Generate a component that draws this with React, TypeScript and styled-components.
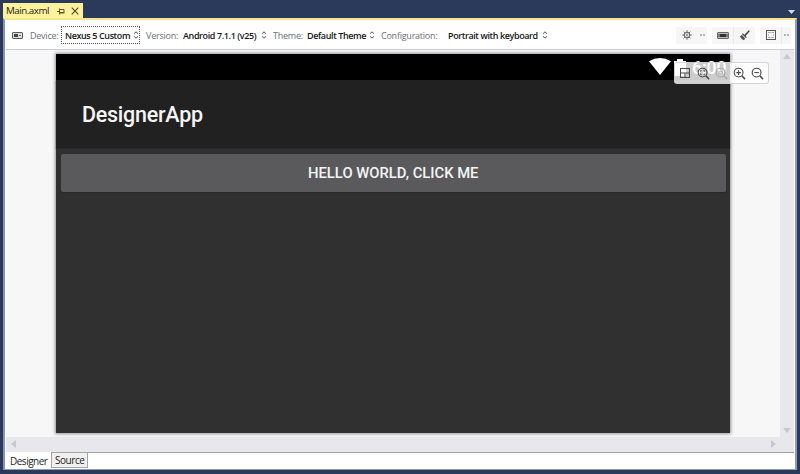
import React from "react";
import styled, { createGlobalStyle } from "styled-components";

const Global = createGlobalStyle`
  *, *::before, *::after { box-sizing: border-box; }
  html, body { margin: 0; padding: 0; overflow: hidden; }
  body { font-family: "Open Sans", "Noto Sans", sans-serif; color: #1e1e1e; }
  svg { display: block; flex: none; }
`;

const Window = styled.div`
  width: 800px;
  height: 474px;
  padding: 3px 3px 4px 3px;
  background: #2b3a5a;
  display: flex;
  flex-direction: column;
`;

const TabStrip = styled.header`
  height: 15px;
  flex: none;
  display: flex;
  justify-content: space-between;
  padding-right: 2px;
`;

const DocumentTab = styled.div`
  width: 80px;
  height: 15px;
  padding-left: 3px;
  background: #fff29d;
  display: flex;
  align-items: center;
  gap: 8px;
  color: #1b1b1b;
`;

const TabTitle = styled.span`
  width: 43px;
  font-size: 9.8px;
  line-height: 14px;
  letter-spacing: -0.5px;
  white-space: nowrap;
  padding-top: 1px;
`;

const TabIcons = styled.div`
  display: flex;
  align-items: center;
  gap: 6px;
  padding-top: 1px;
`;

const StripMenu = styled.div`
  display: flex;
  align-items: center;
  padding-top: 3px;
`;

const Panel = styled.main`
  flex: 1;
  display: flex;
  flex-direction: column;
  background: #fff;
  border-top: 2px solid #f4e88f;
  border-left: 2px solid #8693b5;
  border-right: 2px solid #8e9bbc;
  border-bottom: 1px solid #8e9bbc;
  padding: 0 1px;
`;

const Toolbar = styled.div`
  height: 30px;
  flex: none;
  display: flex;
  align-items: center;
  padding: 1px 0 0 6px;
  border-bottom: 1px solid #c9ccd0;
`;

const FieldLabel = styled.span<{ $w: number; $indent?: number }>`
  width: ${(p) => p.$w}px;
  padding: 1px 0 0 ${(p) => p.$indent ?? 0}px;
  flex: none;
  font-size: 9px;
  line-height: 14px;
  letter-spacing: -0.24px;
  color: #6a6f77;
  white-space: nowrap;
`;

const Picker = styled.div<{ $w: number; $focus?: boolean }>`
  width: ${(p) => p.$w}px;
  height: 18px;
  flex: none;
  display: flex;
  align-items: center;
  justify-content: space-between;
  padding: 0 0 0 3px;
  border: 1px dotted ${(p) => (p.$focus ? "#555" : "transparent")};
`;

const PickerText = styled.span`
  font-size: 9px;
  font-weight: 600;
  line-height: 14px;
  letter-spacing: -0.39px;
  color: #161616;
  white-space: nowrap;
  padding-top: 1px;
`;

const KeyIcon = styled.div`
  width: 18px;
  flex: none;
`;

const ActionGroups = styled.div`
  margin-left: auto;
  display: flex;
  gap: 5px;
  padding-right: 3px;
`;

const ActionGroup = styled.div`
  display: flex;
  height: 17px;
  border-radius: 2px;
  background: #f6f6f6;
`;

const ActionButton = styled.div<{ $w: number; $divided?: boolean }>`
  width: ${(p) => p.$w}px;
  display: flex;
  align-items: center;
  justify-content: center;
  border-left: ${(p) => (p.$divided ? "1px solid #e9e9e9" : "none")};
`;

const Workspace = styled.div`
  flex: 1;
  display: grid;
  grid-template-columns: 1fr 14px;
  grid-template-rows: 1fr 14px;
  background: #e8e8ec;
  border-bottom: 1px solid #e8e8ec;
`;

const Canvas = styled.div`
  position: relative;
  background: #f7f7f7;
  padding: 4px 0 0 50px;
`;

const Scrollbar = styled.div<{ $vertical?: boolean }>`
  display: flex;
  flex-direction: ${(p) => (p.$vertical ? "column" : "row")};
  justify-content: space-between;
  align-items: center;
  padding: ${(p) => (p.$vertical ? "4px 0 4px" : "0 4px 0 5px")};
`;

const Device = styled.div`
  width: 674px;
  height: 379px;
  background: #303030;
  box-shadow: 0 0 3px 1px rgba(0, 0, 0, 0.4);
  font-family: Roboto, sans-serif;
  color: #fff;
`;

const StatusBar = styled.div`
  height: 26px;
  background: #000;
  display: flex;
  padding: 4px 3px 0 0;
  justify-content: flex-end;
`;

const BatteryIcon = styled.div`
  width: 12px;
  margin-left: 3px;
  padding-top: 1px;
`;

const Clock = styled.span`
  width: 35px;
  margin-left: 6px;
  font-size: 17.5px;
  font-weight: 500;
  line-height: 20px;
  white-space: nowrap;
`;

const AppBar = styled.div`
  height: 68px;
  padding-left: 26px;
  display: flex;
  align-items: center;
  background: #212121;
  box-shadow: 0 1px 1px #292929;
`;

const AppTitle = styled.span`
  font-size: 21.5px;
  font-weight: 500;
  letter-spacing: -0.25px;
  color: #f5f5f5;
`;

const HelloButton = styled.div`
  height: 38px;
  margin: 6px 4px 0 4.5px;
  border-radius: 2px;
  background: #5a5a5c;
  box-shadow: 0 1px 1px #292929;
  display: flex;
  align-items: center;
  justify-content: center;
  font-size: 14.8px;
  font-weight: 500;
  color: #f5f5f5;
  white-space: nowrap;
`;

const ZoomBar = styled.div`
  position: absolute;
  left: 668px;
  top: 12px;
  width: 95px;
  height: 22px;
  padding-left: 5px;
  display: flex;
  align-items: center;
  gap: 5px;
  border: 1px solid rgba(205, 205, 205, 0.85);
  border-radius: 3px;
  background: rgba(255, 255, 255, 0.8);
`;

const PanesIcon = styled.div`
  margin-right: 2px;
`;

const ViewTabs = styled.footer`
  height: 17px;
  flex: none;
  display: flex;
  align-items: flex-start;
`;

const ViewTab = styled.div<{ $active?: boolean }>`
  width: ${(p) => (p.$active ? 45 : 37)}px;
  height: ${(p) => (p.$active ? 17 : 16)}px;
  border: ${(p) => (p.$active ? "none" : "1px solid #a5a5a5")};
  background: ${(p) => (p.$active ? "#fff" : "#f0f0f0")};
  padding: ${(p) => (p.$active ? "2px 0 0 4px" : "0 0 0 3px")};
  font-size: 10px;
  line-height: 15px;
  letter-spacing: ${(p) => (p.$active ? -0.5 : -0.45)}px;
  white-space: nowrap;
`;

const ViewTabsRule = styled.div`
  flex: 1;
  height: 1px;
  background: #a0a0a0;
`;

const UpDown = () => (
  <svg width="6" height="8" viewBox="0 0 6 8" fill="none" stroke="#555" strokeWidth="1">
    <path d="M1 2.7 3 .8l2 1.9M1 5.3l2 1.9 2-1.9" />
  </svg>
);

const arrows = {
  up: "M0 5 4 0l4 5z",
  down: "M0 0h8L4 5z",
  left: "M5 0v8L0 4z",
  right: "M0 0v8l5-4z",
};

const Arrow = ({ dir }: { dir: keyof typeof arrows }) => {
  const tall = dir === "left" || dir === "right";
  return (
    <svg width={tall ? 5 : 8} height={tall ? 8 : 5} fill="#c6c7d0">
      <path d={arrows[dir]} />
    </svg>
  );
};

const Keyboard = () => (
  <svg width="11" height="7" viewBox="0 0 11 7">
    <rect x=".5" y=".5" width="10" height="6" rx=".6" fill="#ddd" stroke="#555" />
    <path d="M2 2h4v3H2z" fill="#444" />
    <path d="M7 3.5h2" stroke="#777" />
  </svg>
);

const Pin = () => (
  <svg width="8" height="7" viewBox="0 0 8 7" fill="none" stroke="#5c5634">
    <path d="M0 3.5h2.5M2.5.5v6M3 1.5h4v3H3M3 5h4.5" />
  </svg>
);

const Close = () => (
  <svg width="8" height="8" viewBox="0 0 8 8" stroke="#4a452c" strokeWidth="1.1">
    <path d="m.7.7 6.6 6.6M7.3.7.7 7.3" />
  </svg>
);

const Gear = () => (
  <svg width="12" height="12" viewBox="0 0 12 12" fill="none" stroke="#707070">
    <circle cx="6" cy="6" r="2.7" strokeWidth="1.2" />
    <circle cx="6" cy="6" r=".8" strokeWidth=".8" />
    <path d="M6 1.2v2M6 8.8v2M1.2 6h2M8.8 6h2M2.6 2.6 4 4M8 8l1.4 1.4M2.6 9.4 4 8M8 4l1.4-1.4" />
  </svg>
);

const Dots = () => (
  <svg width="5" height="2" fill="#777">
    <path d="M0 .5h2v1H0zM3 .5h2v1H3z" />
  </svg>
);

const DeviceFrame = () => (
  <svg width="12" height="7" viewBox="0 0 12 7">
    <rect x=".5" y=".5" width="11" height="6" rx=".5" fill="#bbb" stroke="#666" />
    <path d="M2.5 2h7v3h-7z" fill="#333" />
    <path d="M1.5 2v3M10.5 2v3" stroke="#555" strokeWidth=".6" />
  </svg>
);

const Brush = () => (
  <svg width="11" height="11" viewBox="0 0 11 11">
    <path d="M9.8 1.2 6 5.4" stroke="#484848" strokeWidth="1.6" strokeLinecap="round" />
    <path d="m3.8 3.2 4 4-.9.9-4-4z" fill="#444" />
    <path d="m2.7 4.8 3.4 3.4-1 2C3.4 9.8 1.5 8.2.8 6c1 0 1.5-.4 1.9-1.2z" fill="#555" />
  </svg>
);

const GridBox = () => (
  <svg width="10" height="10" viewBox="0 0 10 10">
    <rect x=".5" y=".5" width="9" height="9" fill="none" stroke="#555" />
    <path d="M2.5 2h1v1h-1zM6.5 2h1v1h-1zM2.5 7h1v1h-1zM6.5 7h1v1h-1z" fill="#555" />
    <path d="M4.5 2.5h1M4.5 7.5h1M2.5 4.5v1M7.5 4.5v1" stroke="#999" />
  </svg>
);

const Panes = () => (
  <svg width="10" height="10" viewBox="0 0 10 10" fill="none" stroke="#4b4b4b" strokeWidth="1.1">
    <path d="M.5.5h9v9h-9zM.5 5h9M5 5v4.5" />
  </svg>
);

const Lens = ({ kind, faded }: { kind: "fit" | "actual" | "in" | "out"; faded?: boolean }) => (
  <svg
    width="13"
    height="13"
    viewBox="0 0 13 13"
    fill="none"
    stroke={faded ? "#aaa" : "#4b4b4b"}
    strokeWidth="1.1"
  >
    <circle cx="5.6" cy="5.6" r="4.4" />
    <path d="m8.9 8.9 3.2 3.2" strokeWidth="1.5" />
    {kind === "in" && <path d="M3.3 5.6h4.6M5.6 3.3v4.6" />}
    {kind === "out" && <path d="M3.3 5.6h4.6" />}
    {kind === "fit" && (
      <path strokeWidth=".8" d="M3.5 4.8V3.5h1.3M6.4 3.5h1.3v1.3M3.5 6.4v1.3h1.3M6.4 7.7h1.3V6.4" />
    )}
    {kind === "actual" && <path d="M4 4v3.2M7.2 4v3.2M5.6 4.5v.8M5.6 6v.8" />}
  </svg>
);

const Wifi = () => (
  <svg width="22" height="17" viewBox="0 0 22 17">
    <path d="M0 3.2Q11-3 22 3.2L11 17z" fill="#fff" />
  </svg>
);

const Battery = () => (
  <svg width="12" height="17" fill="#fff">
    <path d="M3 0h6v2h3v15H0V2h3z" />
  </svg>
);

export default function App() {
  return (
    <>
      <Global />
      <Window>
        <TabStrip>
          <DocumentTab>
            <TabTitle>Main.axml</TabTitle>
            <TabIcons>
              <Pin />
              <Close />
            </TabIcons>
          </DocumentTab>
          <StripMenu>
            <svg width="7" height="4" fill="#d5dae8">
              <path d="M0 0h7L3.5 4z" />
            </svg>
          </StripMenu>
        </TabStrip>
        <Panel>
          <Toolbar>
            <KeyIcon>
              <Keyboard />
            </KeyIcon>
            <FieldLabel $w={31}>Device:</FieldLabel>
            <Picker $w={79} $focus>
              <PickerText>Nexus 5 Custom</PickerText>
              <UpDown />
            </Picker>
            <FieldLabel $w={39} $indent={6}>Version:</FieldLabel>
            <Picker $w={89}>
              <PickerText>Android 7.1.1 (v25)</PickerText>
              <UpDown />
            </Picker>
            <FieldLabel $w={35} $indent={5}>Theme:</FieldLabel>
            <Picker $w={73}>
              <PickerText>Default Theme</PickerText>
              <UpDown />
            </Picker>
            <FieldLabel $w={68} $indent={5}>Configuration:</FieldLabel>
            <Picker $w={105}>
              <PickerText>Portrait with keyboard</PickerText>
              <UpDown />
            </Picker>
            <ActionGroups>
              <ActionGroup>
                <ActionButton $w={21}><Gear /></ActionButton>
                <ActionButton $w={10}><Dots /></ActionButton>
              </ActionGroup>
              <ActionGroup>
                <ActionButton $w={21}><DeviceFrame /></ActionButton>
                <ActionButton $w={22} $divided><Brush /></ActionButton>
              </ActionGroup>
              <ActionGroup>
                <ActionButton $w={21}><GridBox /></ActionButton>
                <ActionButton $w={10} $divided><Dots /></ActionButton>
              </ActionGroup>
            </ActionGroups>
          </Toolbar>
          <Workspace>
            <Canvas>
              <Device>
                <StatusBar>
                  <Wifi />
                  <BatteryIcon>
                    <Battery />
                  </BatteryIcon>
                  <Clock>6:00</Clock>
                </StatusBar>
                <AppBar>
                  <AppTitle>DesignerApp</AppTitle>
                </AppBar>
                <HelloButton>HELLO WORLD, CLICK ME</HelloButton>
              </Device>
              <ZoomBar>
                <PanesIcon>
                  <Panes />
                </PanesIcon>
                <Lens kind="fit" />
                <Lens kind="actual" faded />
                <Lens kind="in" />
                <Lens kind="out" />
              </ZoomBar>
            </Canvas>
            <Scrollbar $vertical>
              <Arrow dir="up" />
              <Arrow dir="down" />
            </Scrollbar>
            <Scrollbar>
              <Arrow dir="left" />
              <Arrow dir="right" />
            </Scrollbar>
          </Workspace>
          <ViewTabs>
            <ViewTab $active>Designer</ViewTab>
            <ViewTab>Source</ViewTab>
            <ViewTabsRule />
          </ViewTabs>
        </Panel>
      </Window>
    </>
  );
}
